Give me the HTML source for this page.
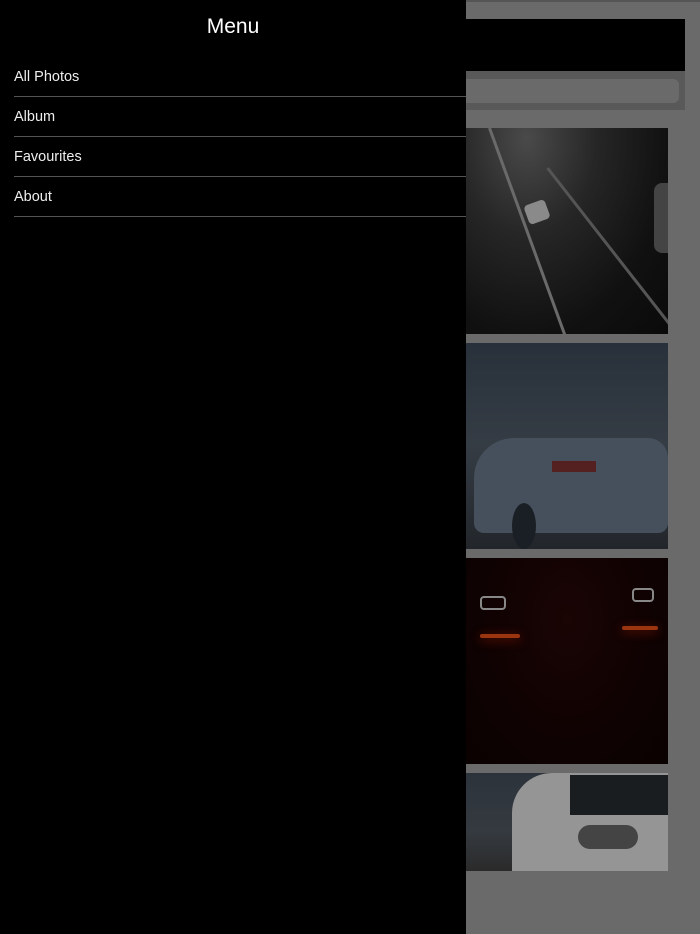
<!DOCTYPE html>
<html><head><meta charset="utf-8"><style>
*{margin:0;padding:0;box-sizing:border-box}
body{width:700px;height:934px;background:#6a6a6a;position:relative;overflow:hidden;font-family:"Liberation Sans",sans-serif}
.abs{position:absolute}
.img{overflow:hidden}
#menu{left:0;top:0;width:466px;height:934px;background:#000}
.t{position:absolute;left:0;width:466px;top:15px;text-align:center;color:#fff;font-size:21px}
.it{position:absolute;left:14px;color:#eee;font-size:14.5px}
.sep{position:absolute;left:14px;width:452px;height:1px;background:#555}
</style></head><body>
<div class="abs" style="left:466px;top:0;width:234px;height:2px;background:#555"></div>
<div class="abs" style="left:466px;top:19px;width:219px;height:52px;background:#000"></div>
<div class="abs" style="left:466px;top:71px;width:219px;height:39px;background:#595959"></div>
<div class="abs" style="left:466px;top:79px;width:213px;height:24px;background:#6a6a6a;border-radius:0 6px 6px 0"></div>
<div class="abs img" style="left:466px;top:128px;width:202px;height:206px;background:radial-gradient(ellipse at 30% 5%,#4a4a4a 0%,#262626 35%,#111 70%,#0a0a0a 100%)">
<div class="abs" style="left:22px;top:0;width:3px;height:230px;background:#6a6a6a;transform:rotate(-20deg);transform-origin:top"></div>
<div class="abs" style="left:80px;top:40px;width:3px;height:220px;background:#555;transform:rotate(-38deg);transform-origin:top"></div>
<div class="abs" style="left:60px;top:74px;width:22px;height:20px;background:#8a8a8a;border-radius:4px;transform:rotate(-20deg)"></div>
<div class="abs" style="left:188px;top:55px;width:16px;height:70px;background:#444;border-radius:8px 0 0 8px"></div>
</div>
<div class="abs img" style="left:466px;top:343px;width:202px;height:206px;background:linear-gradient(180deg,#28313b 0%,#353c44 50%,#22262b 100%)">
<div class="abs" style="left:8px;top:95px;width:194px;height:95px;background:#45505c;border-radius:40px 20px 10px 10px"></div>
<div class="abs" style="left:86px;top:118px;width:44px;height:11px;background:#552020"></div>
<div class="abs" style="left:46px;top:160px;width:24px;height:46px;background:#1a1f25;border-radius:50%"></div>
</div>
<div class="abs img" style="left:466px;top:558px;width:202px;height:206px;background:radial-gradient(ellipse at 50% 30%,#1a0404 0%,#0f0202 60%,#0a0101 100%)">
<div class="abs" style="left:14px;top:38px;width:26px;height:14px;border:2px solid #888;border-radius:4px"></div>
<div class="abs" style="left:166px;top:30px;width:22px;height:14px;border:2px solid #888;border-radius:4px"></div>
<div class="abs" style="left:14px;top:76px;width:40px;height:4px;background:#9a3510;border-radius:3px;box-shadow:0 2px 10px #701505"></div>
<div class="abs" style="left:156px;top:68px;width:36px;height:4px;background:#9a3510;border-radius:3px;box-shadow:0 2px 10px #701505"></div>
</div>
<div class="abs img" style="left:466px;top:773px;width:202px;height:98px;background:linear-gradient(180deg,#2c333b 0%,#353a40 60%,#2a2a2a 100%)">
<div class="abs" style="left:46px;top:0;width:156px;height:98px;background:#959595;border-radius:40px 0 0 0"></div>
<div class="abs" style="left:104px;top:2px;width:98px;height:40px;background:#1a1d20"></div>
<div class="abs" style="left:112px;top:52px;width:60px;height:24px;background:#444;border-radius:12px"></div>
</div>
<div id="menu" class="abs">
<div class="t">Menu</div>
<div class="it" style="top:69px">All Photos</div>
<div class="sep" style="top:96px"></div>
<div class="it" style="top:109px">Album</div>
<div class="sep" style="top:136px"></div>
<div class="it" style="top:149px">Favourites</div>
<div class="sep" style="top:176px"></div>
<div class="it" style="top:189px">About</div>
<div class="sep" style="top:216px"></div>
</div>
</body></html>
